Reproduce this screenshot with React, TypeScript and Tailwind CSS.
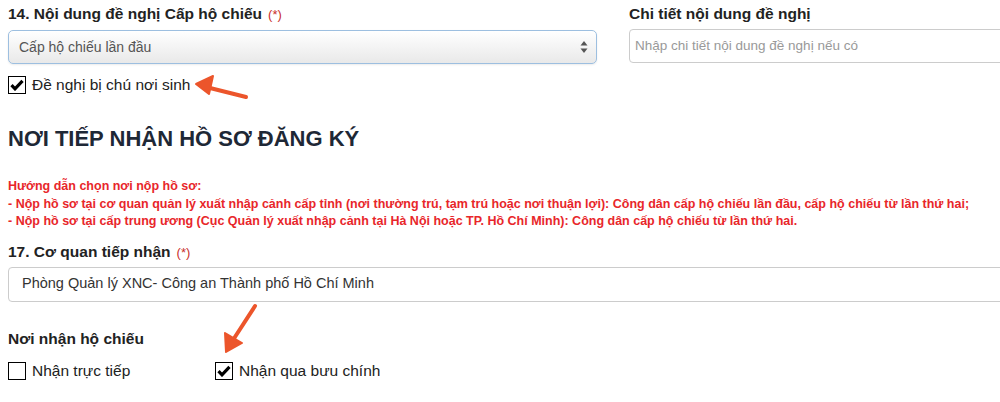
import React from "react";

const font = { fontFamily: '"Liberation Sans", Arial, sans-serif' };

function CheckBox({ checked }: { checked?: boolean }) {
  return (
    <span className="inline-flex w-[18px] h-[18px] border-[1.5px] border-black bg-white items-center justify-center shrink-0">
      {checked && (
        <svg width="14" height="12" viewBox="0 0 14 12">
          <path d="M1.5 6.2 L5 9.8 L12.5 1.8" fill="none" stroke="#000" strokeWidth="3.2" strokeLinejoin="miter" />
        </svg>
      )}
    </span>
  );
}

function Required() {
  return <span className="text-[#c9302c] font-normal text-[13px] ml-[6px]">(*)</span>;
}

export default function App() {
  return (
    <div className="relative w-[1000px] h-[402px] overflow-hidden bg-white text-[#222]" style={font}>
      <div className="flex pl-[8px] pt-[4px] gap-[32px]">
        <div className="w-[589px] shrink-0">
          <div className="text-[15.5px] font-bold leading-[20px] text-[#222]">
            14. Nội dung đề nghị Cấp hộ chiếu<Required />
          </div>
          <div className="mt-[5px] h-[34px] rounded-[5px] border border-[#9dbfe0] bg-gradient-to-b from-white to-[#e9e9e9] shadow-[0_1px_2px_rgba(0,0,0,0.08)] flex items-center justify-between pl-[10px] pr-[8px]">
            <span className="text-[14px] text-[#555]">Cấp hộ chiếu lần đầu</span>
            <svg width="8" height="14" viewBox="0 0 8 14">
              <path d="M4 1 L7.5 5.5 L0.5 5.5 Z" fill="#555" />
              <path d="M4 13 L7.5 8.5 L0.5 8.5 Z" fill="#555" />
            </svg>
          </div>
          <label className="mt-[11px] flex items-center gap-[6px] h-[20px]">
            <CheckBox checked />
            <span className="text-[15.5px] text-[#222]">Đề nghị bị chú nơi sinh</span>
          </label>
        </div>
        <div className="w-[420px] shrink-0">
          <div className="text-[15.5px] font-bold leading-[20px] text-[#222]">Chi tiết nội dung đề nghị</div>
          <div className="mt-[5px] h-[34px] rounded-[4px] border border-[#ccc] bg-white flex items-center pl-[5px]">
            <span className="text-[13.5px] text-[#999]">Nhập chi tiết nội dung đề nghị nếu có</span>
          </div>
        </div>
      </div>

      <div className="pl-[8px]">
        <h2 className="mt-[31px] text-[22px] font-bold leading-[26px] text-[#1e2836]">NƠI TIẾP NHẬN HỒ SƠ ĐĂNG KÝ</h2>
        <div className="mt-[26px] text-[12.5px] font-bold leading-[17.5px] text-[#e8262a]">
          <div>Hướng dẫn chọn nơi nộp hồ sơ:</div>
          <div>- Nộp hồ sơ tại cơ quan quản lý xuất nhập cảnh cấp tỉnh (nơi thường trú, tạm trú hoặc nơi thuận lợi): Công dân cấp hộ chiếu lần đầu, cấp hộ chiếu từ lần thứ hai;</div>
          <div>- Nộp hồ sơ tại cấp trung ương (Cục Quản lý xuất nhập cảnh tại Hà Nội hoặc TP. Hồ Chí Minh): Công dân cấp hộ chiếu từ lần thứ hai.</div>
        </div>
        <div className="mt-[11px] text-[15.5px] font-bold leading-[20px]">
          17. Cơ quan tiếp nhận<Required />
        </div>
        <div className="mt-[4px] h-[35px] w-[1010px] rounded-[4px] border border-[#ccc] bg-white flex items-center pl-[13px]">
          <span className="text-[14.5px] text-[#333]">Phòng Quản lý XNC- Công an Thành phố Hồ Chí Minh</span>
        </div>
        <div className="mt-[27px] text-[15.5px] font-bold leading-[20px]">Nơi nhận hộ chiếu</div>
        <div className="mt-[12px] flex items-center h-[20px]">
          <label className="flex items-center gap-[6px] w-[207px]">
            <CheckBox />
            <span className="text-[15.5px] text-[#222]">Nhận trực tiếp</span>
          </label>
          <label className="flex items-center gap-[6px]">
            <CheckBox checked />
            <span className="text-[15.5px] text-[#222]">Nhận qua bưu chính</span>
          </label>
        </div>
      </div>

      <svg className="absolute left-0 top-0 pointer-events-none" width="1000" height="402">
        <g fill="#ec552b" stroke="#ec552b" strokeLinecap="round" strokeLinejoin="round">
          <line x1="246" y1="97" x2="206" y2="87" strokeWidth="4" />
          <path d="M196 84 L213 76 L209 94 Z" strokeWidth="2" />
          <line x1="255" y1="306" x2="233" y2="340" strokeWidth="4" />
          <path d="M226 352 L225 333 L242 343 Z" strokeWidth="2" />
        </g>
      </svg>
    </div>
  );
}
